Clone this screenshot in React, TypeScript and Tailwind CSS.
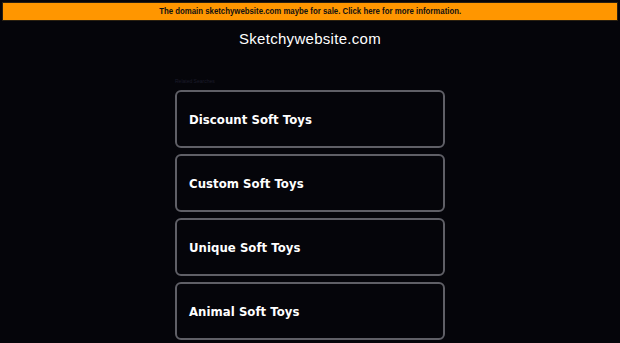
import React from "react";

const items = ["Discount Soft Toys", "Custom Soft Toys", "Unique Soft Toys", "Animal Soft Toys"];

export default function App() {
  return (
    <div className="w-[620px] h-[343px] overflow-hidden bg-[#05050a] pt-[2px] px-[2px]" style={{ fontFamily: "'Liberation Sans', Arial, sans-serif" }}>
      <div className="h-[19px] bg-[#ff9600] border border-[#2a2010] flex items-center justify-center text-[8.5px] font-bold text-[#111] leading-none">
        <span className="inline-block scale-x-[0.92]">The domain sketchywebsite.com maybe for sale. Click here for more information.</span>
      </div>
      <div className="mt-[9px] text-center text-[15px] text-white tracking-[0.3px] leading-[18px]">Sketchywebsite.com</div>
      <div className="w-[270px] mx-auto mt-[30px]">
        <div className="text-[5px] text-[#1c1c2a] leading-[6px] h-[6px]">Related Searches</div>
        <div className="mt-[6px] flex flex-col gap-[6px]">
          {items.map((t) => (
            <div key={t} className="h-[58px] border-2 border-[#5f5f66] rounded-[6px] flex items-center pl-[12px] pt-[1px]">
              <span className="text-white font-bold text-[13px] tracking-[0.05px]" style={{ fontFamily: "'DejaVu Sans Condensed', 'DejaVu Sans', Verdana, sans-serif", fontStretch: "condensed" }}>{t}</span>
            </div>
          ))}
        </div>
      </div>
    </div>
  );
}
